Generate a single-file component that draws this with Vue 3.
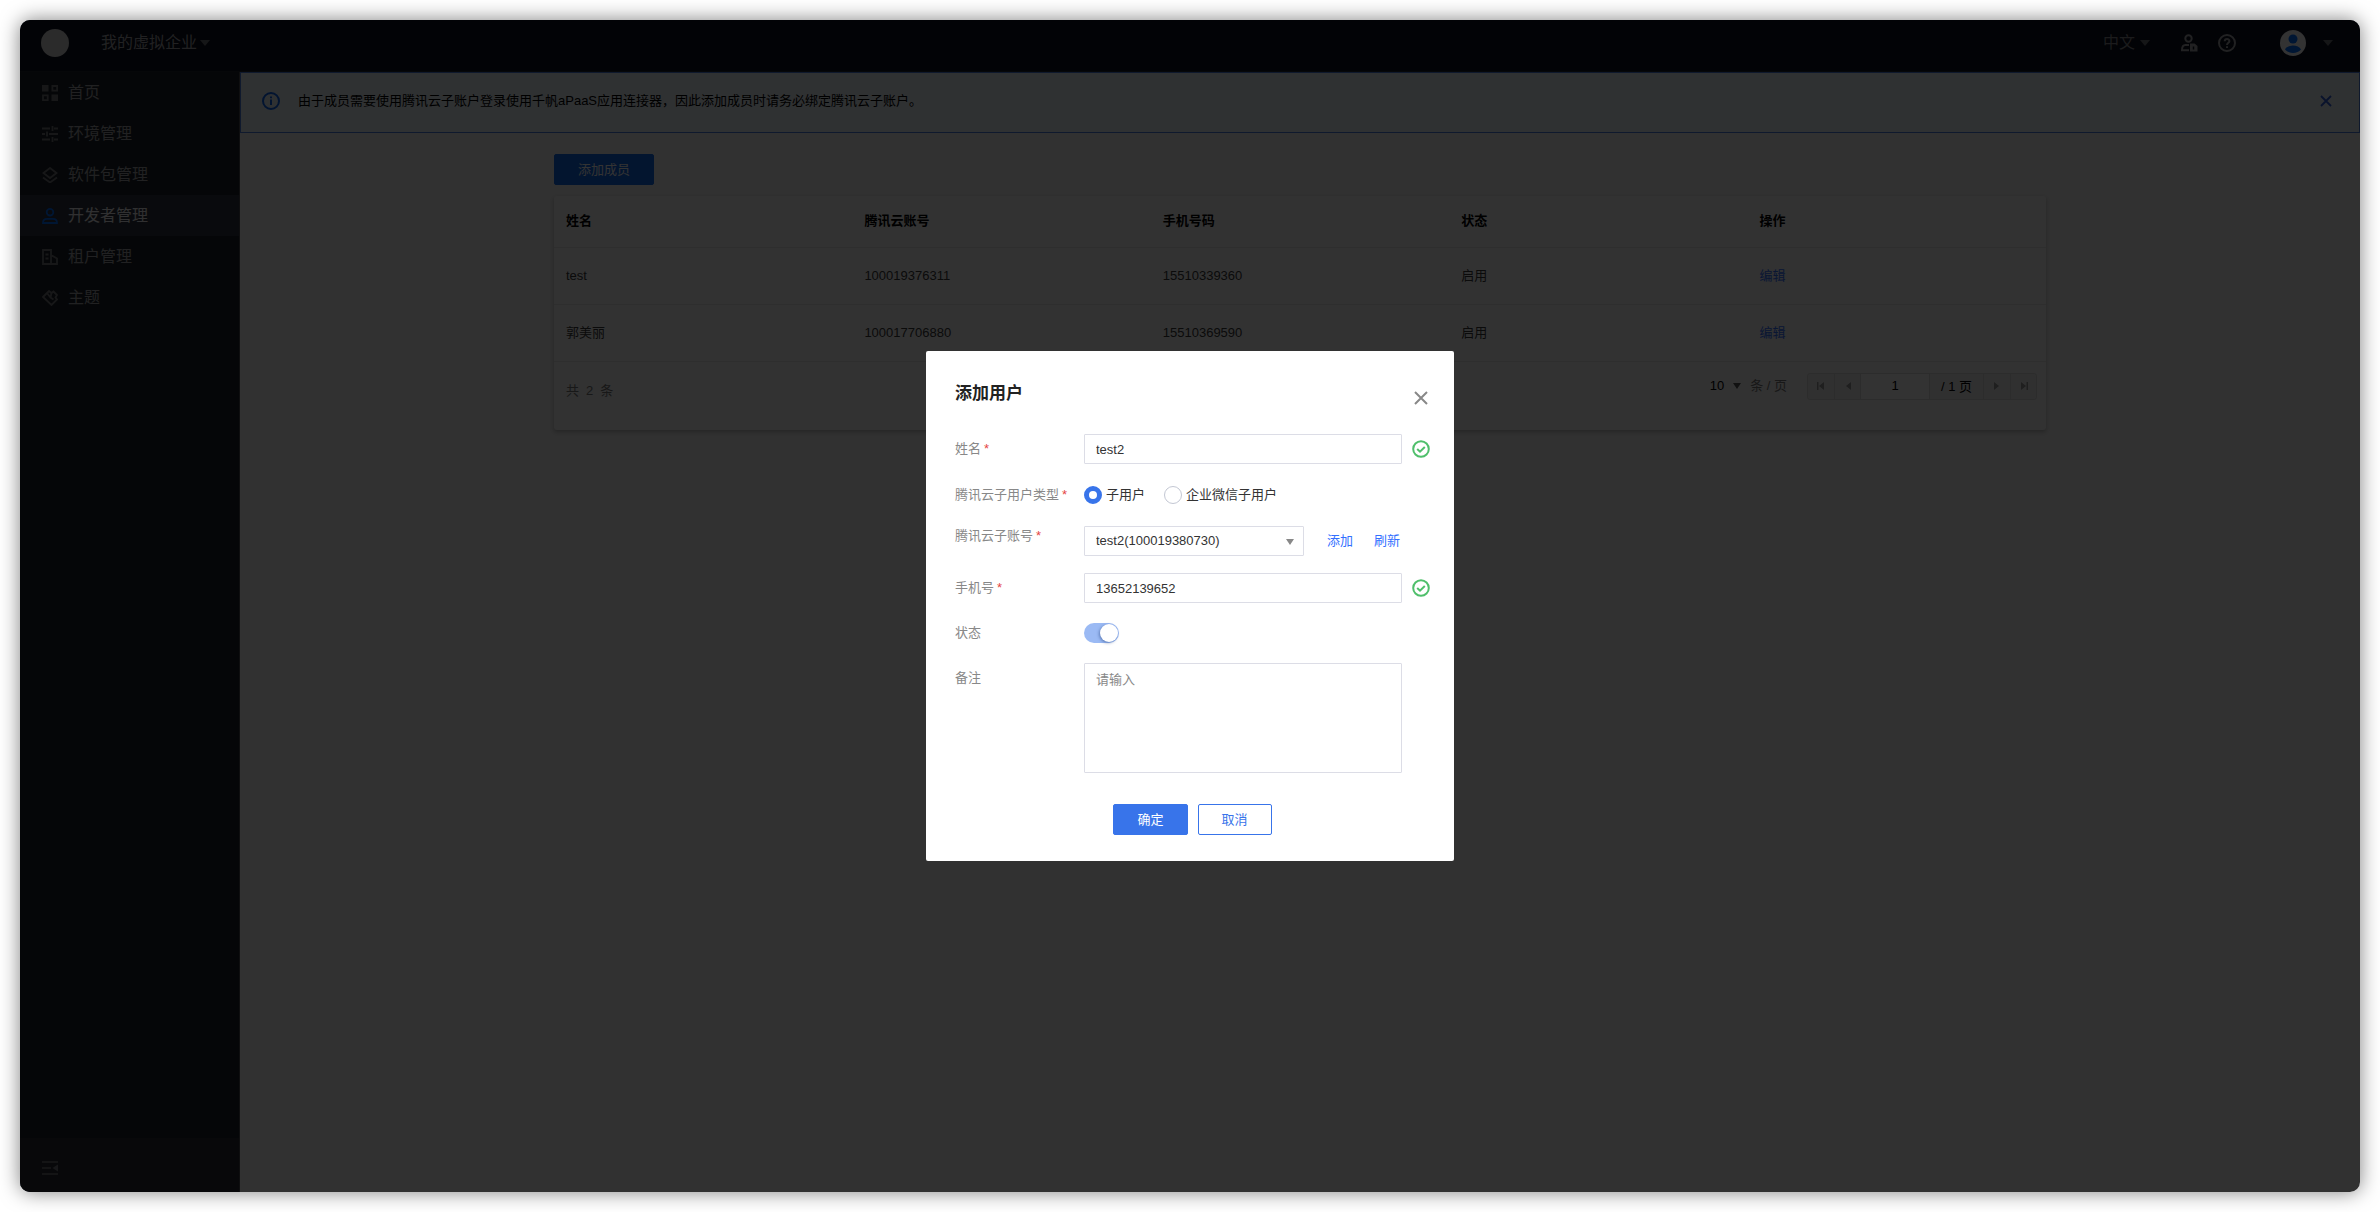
<script setup>
import { ref, reactive } from 'vue'

const menu = [
  { key: 'home', label: '首页' },
  { key: 'env', label: '环境管理' },
  { key: 'package', label: '软件包管理' },
  { key: 'developer', label: '开发者管理' },
  { key: 'tenant', label: '租户管理' },
  { key: 'theme', label: '主题' },
]
const active = ref('developer')

const members = [
  { name: 'test', account: '100019376311', phone: '15510339360', status: '启用' },
  { name: '郭美丽', account: '100017706880', phone: '15510369590', status: '启用' },
]

const form = reactive({
  name: 'test2',
  type: 'sub',
  account: 'test2(100019380730)',
  phone: '13652139652',
  enabled: true,
  remark: '',
})
const page = ref('1')
</script>

<template>
  <div class="stage">
    <div class="frame">
      <header class="topbar">
        <span class="logo"></span>
        <button class="plain company" type="button">我的虚拟企业<i class="caret"></i></button>
        <div class="tools">
          <button class="plain lang" type="button">中文<i class="caret"></i></button>
          <button class="plain" type="button" aria-label="账号权限">
            <svg class="tool-icon" viewBox="0 0 18 18" fill="none" stroke="currentColor" stroke-width="2">
              <circle cx="8.500" cy="4.500" r="3.200" />
              <path d="M9 11H5.500C3 11 2 12.600 2 16.200h7" />
              <path d="M10 9.500h4.500l3 2.500V17.500H10z" fill="currentColor" stroke="none" />
              <path d="M13.500 12.500v3" stroke="#0c101e" stroke-width="1.500" />
            </svg>
          </button>
          <button class="plain help" type="button" aria-label="帮助">
            <svg class="tool-icon" viewBox="0 0 18 18" fill="none" stroke="currentColor" stroke-width="2">
              <circle cx="9" cy="9" r="8" />
              <path d="M6.700 7.300C6.700 4.200 11.400 4.200 11.400 7.200 11.400 8.800 9 8.800 9 11" />
              <path d="M9 12.200v1.900" />
            </svg>
          </button>
          <button class="plain account" type="button" aria-label="个人中心">
            <svg class="avatar" viewBox="0 0 26 26">
              <circle cx="13" cy="13" r="13" fill="#fff" />
              <circle cx="13" cy="9" r="4.500" fill="#006eff" />
              <path d="M5 19.500C7.500 14 18.500 14 21 19.500 17.500 24 8.500 24 5 19.500z" fill="#006eff" />
            </svg>
            <i class="caret"></i>
          </button>
        </div>
      </header>

      <div class="body">
        <aside class="sidebar">
          <nav class="menu">
            <a
              v-for="item in menu"
              :key="item.key"
              href="#"
              :class="['menu-item', { active: item.key === active }]"
              @click.prevent="active = item.key"
            >
              <svg class="menu-icon" viewBox="0 0 16 16" fill="none" stroke="currentColor" stroke-width="1.800">
                <g v-if="item.key === 'home'">
                  <path d="M0 0h6.500v6.500H0zM9.500 9.500H16V16H9.500z" fill="currentColor" stroke="none" />
                  <path d="M10.400 1h4.700v4.700h-4.700zM1 10.400h4.700v4.700H1z" />
                </g>
                <g v-else-if="item.key === 'env'">
                  <path d="M0 2.500h8M12 2.500h4M0 8h3M7 8h9M0 13.500h8M12 13.500h4" />
                  <path d="M10.500 0v5M5 5.500v5M10.500 11v5" />
                </g>
                <g v-else-if="item.key === 'package'">
                  <path d="M8 1l6.500 5L8 11 1.500 6z" />
                  <path d="M1 10.500l7 5 7-5" />
                </g>
                <g v-else-if="item.key === 'developer'">
                  <circle cx="8" cy="4.200" r="3.300" />
                  <path d="M1 15c0-3 2-4.200 4-4.200h6c2 0 4 1.200 4 4.200z" />
                </g>
                <g v-else-if="item.key === 'tenant'">
                  <path d="M1 1h8v14H1zM9 6l6 3.500V15H9" />
                  <path d="M3.500 5.500h3M3.500 9.500h3" />
                </g>
                <g v-else>
                  <path d="M1 7l6-6 2.500 2L11.500 1.500 15 5l-1.500 2.500L15 9.500 9.500 15z" />
                  <path d="M5 3l3.500 4.500M9.500 3l-1 4.500 3 2" />
                </g>
              </svg>
              <span>{{ item.label }}</span>
            </a>
          </nav>
          <div class="sidebar-foot">
            <button class="plain" type="button" aria-label="收起菜单">
              <svg class="fold" viewBox="0 0 16 14" fill="none" stroke="currentColor" stroke-width="1.500">
                <path d="M0 1h16M0 7h9M0 13h16" />
                <path d="M16 3.500v7L10.500 7z" fill="currentColor" stroke="none" />
              </svg>
            </button>
          </div>
        </aside>

        <main class="main">
          <div class="notice">
            <svg class="notice-icon" viewBox="0 0 18 18" fill="none" stroke="currentColor" stroke-width="2">
              <circle cx="9" cy="9" r="8" />
              <path d="M9 7.500V13M9 4.500v1.800" />
            </svg>
            <p>由于成员需要使用腾讯云子账户登录使用千帆aPaaS应用连接器，因此添加成员时请务必绑定腾讯云子账户。</p>
            <button class="plain notice-close" type="button" aria-label="关闭提示">
              <svg viewBox="0 0 12 12" fill="none" stroke="currentColor" stroke-width="1.800">
                <path d="M1 1l10 10M11 1L1 11" />
              </svg>
            </button>
          </div>

          <section class="content">
            <button class="btn primary add" type="button">添加成员</button>
            <div class="card">
              <table>
                <thead>
                  <tr>
                    <th>姓名</th>
                    <th>腾讯云账号</th>
                    <th>手机号码</th>
                    <th>状态</th>
                    <th>操作</th>
                  </tr>
                </thead>
                <tbody>
                  <tr v-for="m in members" :key="m.account">
                    <td>{{ m.name }}</td>
                    <td>{{ m.account }}</td>
                    <td>{{ m.phone }}</td>
                    <td>{{ m.status }}</td>
                    <td><a href="#" @click.prevent>编辑</a></td>
                  </tr>
                </tbody>
              </table>
              <footer class="pager">
                <p class="total"><span>共</span><span>2</span><span>条</span></p>
                <div class="pager-right">
                  <button class="plain size" type="button">10<i class="caret small"></i></button>
                  <span class="unit">条 / 页</span>
                  <div class="pages">
                    <button type="button" aria-label="首页">
                      <svg viewBox="0 0 10 10"><path d="M1 1h1.500v8H1zM8 1v8L3 5z" fill="currentColor" /></svg>
                    </button>
                    <button type="button" aria-label="上一页">
                      <svg viewBox="0 0 10 10"><path d="M8 1v8L3 5z" fill="currentColor" /></svg>
                    </button>
                    <input v-model="page" type="text" aria-label="页码" />
                    <span class="count">/ 1 页</span>
                    <button type="button" aria-label="下一页">
                      <svg viewBox="0 0 10 10"><path d="M2 1v8l5-4z" fill="currentColor" /></svg>
                    </button>
                    <button type="button" aria-label="末页">
                      <svg viewBox="0 0 10 10"><path d="M2 1v8l5-4zM7.500 1H9v8H7.500z" fill="currentColor" /></svg>
                    </button>
                  </div>
                </div>
              </footer>
            </div>
          </section>
        </main>
      </div>

      <div class="mask">
        <form class="dialog" role="dialog" aria-labelledby="dialog-title" @submit.prevent>
          <div class="dialog-head">
            <h2 id="dialog-title">添加用户</h2>
            <button class="plain dialog-close" type="button" aria-label="关闭">
              <svg viewBox="0 0 14 14" fill="none" stroke="currentColor" stroke-width="2">
                <path d="M1 1l12 12M13 1L1 13" />
              </svg>
            </button>
          </div>

          <div class="rows">
            <div class="row">
              <label class="label" for="f-name">姓名<em>*</em></label>
              <input id="f-name" v-model="form.name" class="field" type="text" />
              <svg class="ok" viewBox="0 0 18 18" fill="none" stroke="currentColor" stroke-width="2">
                <circle cx="9" cy="9" r="7.800" />
                <path d="M5.200 9l2.800 2.700L12.800 7" />
              </svg>
            </div>

            <div class="row radios" role="radiogroup" aria-labelledby="f-type">
              <span id="f-type" class="label">腾讯云子用户类型<em>*</em></span>
              <div class="options">
                <label><input v-model="form.type" type="radio" name="type" value="sub" />子用户</label>
                <label><input v-model="form.type" type="radio" name="type" value="wecom" />企业微信子用户</label>
              </div>
            </div>

            <div class="row top">
              <label class="label" for="f-account">腾讯云子账号<em>*</em></label>
              <div class="picker">
                <div class="select-box">
                  <select id="f-account" v-model="form.account" class="field">
                    <option>test2(100019380730)</option>
                  </select>
                  <i class="caret small"></i>
                </div>
                <div class="links">
                  <a href="#" @click.prevent>添加</a>
                  <a href="#" @click.prevent>刷新</a>
                </div>
              </div>
            </div>

            <div class="row">
              <label class="label" for="f-phone">手机号<em>*</em></label>
              <input id="f-phone" v-model="form.phone" class="field" type="text" />
              <svg class="ok" viewBox="0 0 18 18" fill="none" stroke="currentColor" stroke-width="2">
                <circle cx="9" cy="9" r="7.800" />
                <path d="M5.200 9l2.800 2.700L12.800 7" />
              </svg>
            </div>

            <div class="row state">
              <label class="label" for="f-state">状态</label>
              <input id="f-state" v-model="form.enabled" class="switch" type="checkbox" role="switch" />
            </div>

            <div class="row top remark">
              <label class="label" for="f-remark">备注</label>
              <textarea id="f-remark" v-model="form.remark" class="field" placeholder="请输入"></textarea>
            </div>
          </div>

          <div class="actions">
            <button class="btn primary" type="submit">确定</button>
            <button class="btn outline" type="button">取消</button>
          </div>
        </form>
      </div>
    </div>
  </div>
</template>

<style>
body {
  background: #fff;
}
</style>

<style scoped>
* {
  box-sizing: border-box;
}
.stage {
  display: flex;
  min-height: 100vh;
  padding: 20px;
  font-family: "Liberation Sans", "Noto Sans CJK SC", sans-serif;
  font-size: 13px;
  line-height: 20px;
  color: #333;
}
.frame {
  position: relative;
  display: flex;
  flex: 1;
  flex-direction: column;
  overflow: hidden;
  border-radius: 10px;
  background: #f3f3f3;
}
.stage {
  position: relative;
}
.stage::before {
  content: "";
  position: absolute;
  inset: 20px;
  border-radius: 10px;
  box-shadow: 0 0 20px rgba(0, 0, 0, 0.5);
}
p,
h2 {
  margin: 0;
}
a {
  color: #3370ff;
  text-decoration: none;
}
button,
input,
select,
textarea {
  font: inherit;
}
.plain {
  display: flex;
  align-items: center;
  padding: 0;
  border: 0;
  background: none;
  color: inherit;
}
.caret {
  border: 5px solid transparent;
  border-top: 6px solid currentColor;
  border-bottom: 0;
}
.caret.small {
  border-width: 6px 4px 0;
}

/* top bar */
.topbar {
  display: flex;
  align-items: center;
  height: 52px;
  padding: 0 27px 5px 21px;
  border-bottom: 1px solid #22252f;
  background: #0c101e;
  color: #a4a6ab;
}
.logo {
  width: 28px;
  height: 28px;
  border-radius: 50%;
  background: #d4d4d4;
}
.company {
  gap: 3px;
  margin-left: 32px;
  font-size: 16px;
}
.company .caret,
.tools .caret {
  color: #6c6e74;
}
.tools {
  display: flex;
  align-items: center;
  margin-left: auto;
}
.lang {
  gap: 5px;
  margin-right: 30px;
  font-size: 16px;
  color: #85878c;
}
.tool-icon {
  width: 18px;
  height: 18px;
}
.help {
  margin-left: 20px;
}
.account {
  gap: 17px;
  margin-left: 44px;
}
.avatar {
  width: 26px;
  height: 26px;
}

/* side menu */
.body {
  display: flex;
  flex: 1;
}
.sidebar {
  display: flex;
  flex-direction: column;
  width: 220px;
  border-right: 1px solid #4a4c52;
  background: #1c2028;
}
.menu-item {
  display: flex;
  align-items: center;
  gap: 10px;
  height: 41px;
  padding-left: 22px;
  font-size: 16px;
  color: #a3a5a9;
}
.menu-item.active {
  background: #2e3341;
  color: #f0f0f2;
}
.menu-icon {
  width: 16px;
  height: 16px;
  color: #74767b;
}
.active .menu-icon {
  color: #006eff;
}
.sidebar-foot {
  display: flex;
  align-items: center;
  height: 54px;
  margin-top: auto;
  padding: 6px 0 0 22px;
  background: #282b33;
  color: #777a80;
}
.fold {
  width: 16px;
  height: 14px;
}

/* notice */
.main {
  flex: 1;
}
.notice {
  display: flex;
  align-items: center;
  height: 61px;
  padding: 0 27px 3px 21px;
  border: 1px solid #4a7de0;
  background: #ebf2fa;
  color: #000;
}
.notice-icon {
  width: 18px;
  height: 18px;
  margin-right: 18px;
  color: #0d63ef;
}
.notice-close {
  margin-left: auto;
  color: #2f5fd9;
}
.notice-close svg {
  width: 12px;
  height: 12px;
}

/* member list */
.content {
  max-width: 1492px;
  margin: 0 auto;
  padding-top: 21px;
}
.btn {
  height: 31px;
  padding: 0 23px;
  border: 1px solid #3874ea;
  border-radius: 2px;
}
.primary {
  background: #3874ea;
  color: #fff;
}
.outline {
  background: #fff;
  color: #3874ea;
}
.add {
  display: block;
  border-color: #0f68ea;
  background: #0f68ea;
}
.card {
  min-height: 234px;
  margin-top: 11px;
  border-radius: 3px;
  background: #f9f9f9;
  box-shadow: 0 2px 4px rgba(0, 0, 0, 0.25);
}
table {
  width: 100%;
  border-collapse: collapse;
  table-layout: fixed;
}
th,
td {
  height: 57px;
  padding: 0 12px;
  border-bottom: 1px solid #e6e6e6;
  text-align: left;
  color: #3a3a3a;
}
th {
  height: 51px;
  color: #000;
}
.pager {
  display: flex;
  justify-content: space-between;
  padding: 11px 9px 0 12px;
}
.total {
  display: flex;
  gap: 7px;
  padding-top: 8px;
  color: #777;
}
.pager-right {
  display: flex;
  align-items: center;
  height: 27px;
}
.size {
  gap: 9px;
  color: #000;
}
.size .caret {
  color: #555;
}
.unit {
  margin: 0 20px 0 9px;
  color: #777;
}
.pages {
  display: flex;
  height: 27px;
  border: 1px solid #dcdcdc;
  border-radius: 3px;
  background: #f1f1f1;
}
.pages button {
  display: flex;
  align-items: center;
  justify-content: center;
  width: 26px;
  padding: 0;
  border: 0;
  background: none;
  color: #999;
}
.pages button + button {
  border-left: 1px solid #dcdcdc;
}
.pages svg {
  width: 10px;
  height: 10px;
}
.pages input {
  width: 70px;
  padding: 0;
  border: 0;
  border-left: 1px solid #dcdcdc;
  border-right: 1px solid #dcdcdc;
  background: #fff;
  text-align: center;
  color: #000;
}
.count {
  width: 54px;
  border-right: 1px solid #dcdcdc;
  line-height: 25px;
  text-align: center;
  color: #000;
}

/* dialog */
.mask {
  position: absolute;
  inset: 0;
  display: flex;
  align-items: center;
  justify-content: center;
  background: rgba(0, 0, 0, 0.8);
}
.dialog {
  width: 528px;
  padding: 30px 24px 26px 29px;
  border-radius: 2px;
  background: #fff;
}
.dialog-head {
  display: flex;
  justify-content: space-between;
  margin-bottom: 27px;
}
h2 {
  font-size: 17px;
  font-weight: 700;
  line-height: 26px;
  color: #222;
}
.dialog-close {
  padding: 8px 2px 0;
  color: #888;
}
.dialog-close svg {
  width: 14px;
  height: 14px;
}
.rows {
  display: flex;
  flex-direction: column;
  gap: 17px;
}
.row {
  display: grid;
  grid-template-columns: 129px 318px 18px;
  align-items: center;
}
.row.top {
  align-items: start;
}
.radios {
  height: 28px;
}
.state {
  height: 26px;
}
.remark .label {
  padding-top: 5px;
}
.label {
  color: #888;
  white-space: nowrap;
}
.label em {
  margin-left: 3px;
  font-style: normal;
  color: #e54545;
}
.field {
  width: 100%;
  height: 30px;
  padding: 0 11px;
  border: 1px solid #dcdde6;
  border-radius: 1px;
  outline: 0;
  background: #fff;
  color: #333;
}
.ok {
  width: 18px;
  height: 18px;
  margin-left: 10px;
  color: #4fbf6b;
}
.options {
  display: flex;
  gap: 19px;
}
.options label {
  display: flex;
  align-items: center;
  gap: 4px;
}
input[type="radio"] {
  width: 18px;
  height: 18px;
  margin: 0;
  border: 1px solid #c3c7d3;
  border-radius: 50%;
  appearance: none;
  background: #fff;
}
input[type="radio"]:checked {
  border: 5px solid #3874ea;
}
.picker {
  display: flex;
  align-items: center;
  justify-content: space-between;
  padding-right: 2px;
}
.select-box {
  position: relative;
  width: 220px;
}
select.field {
  appearance: none;
}
.select-box .caret {
  position: absolute;
  top: 13px;
  right: 10px;
  color: #888;
}
.links {
  display: flex;
  gap: 21px;
}
.switch {
  width: 35px;
  height: 20px;
  margin: 0;
  padding: 1px;
  border-radius: 10px;
  appearance: none;
  background: #9bbaf4;
}
.switch::before {
  content: "";
  display: block;
  width: 18px;
  height: 18px;
  border-radius: 50%;
  background: #fff;
  box-shadow: -1px 1px 3px rgba(40, 70, 130, 0.5);
}
.switch:checked::before {
  margin-left: auto;
}
textarea.field {
  display: block;
  height: 110px;
  padding: 6px 11px;
  resize: none;
}
textarea::placeholder {
  color: #888;
}
.actions {
  display: flex;
  justify-content: center;
  gap: 10px;
  margin-top: 31px;
}
</style>
